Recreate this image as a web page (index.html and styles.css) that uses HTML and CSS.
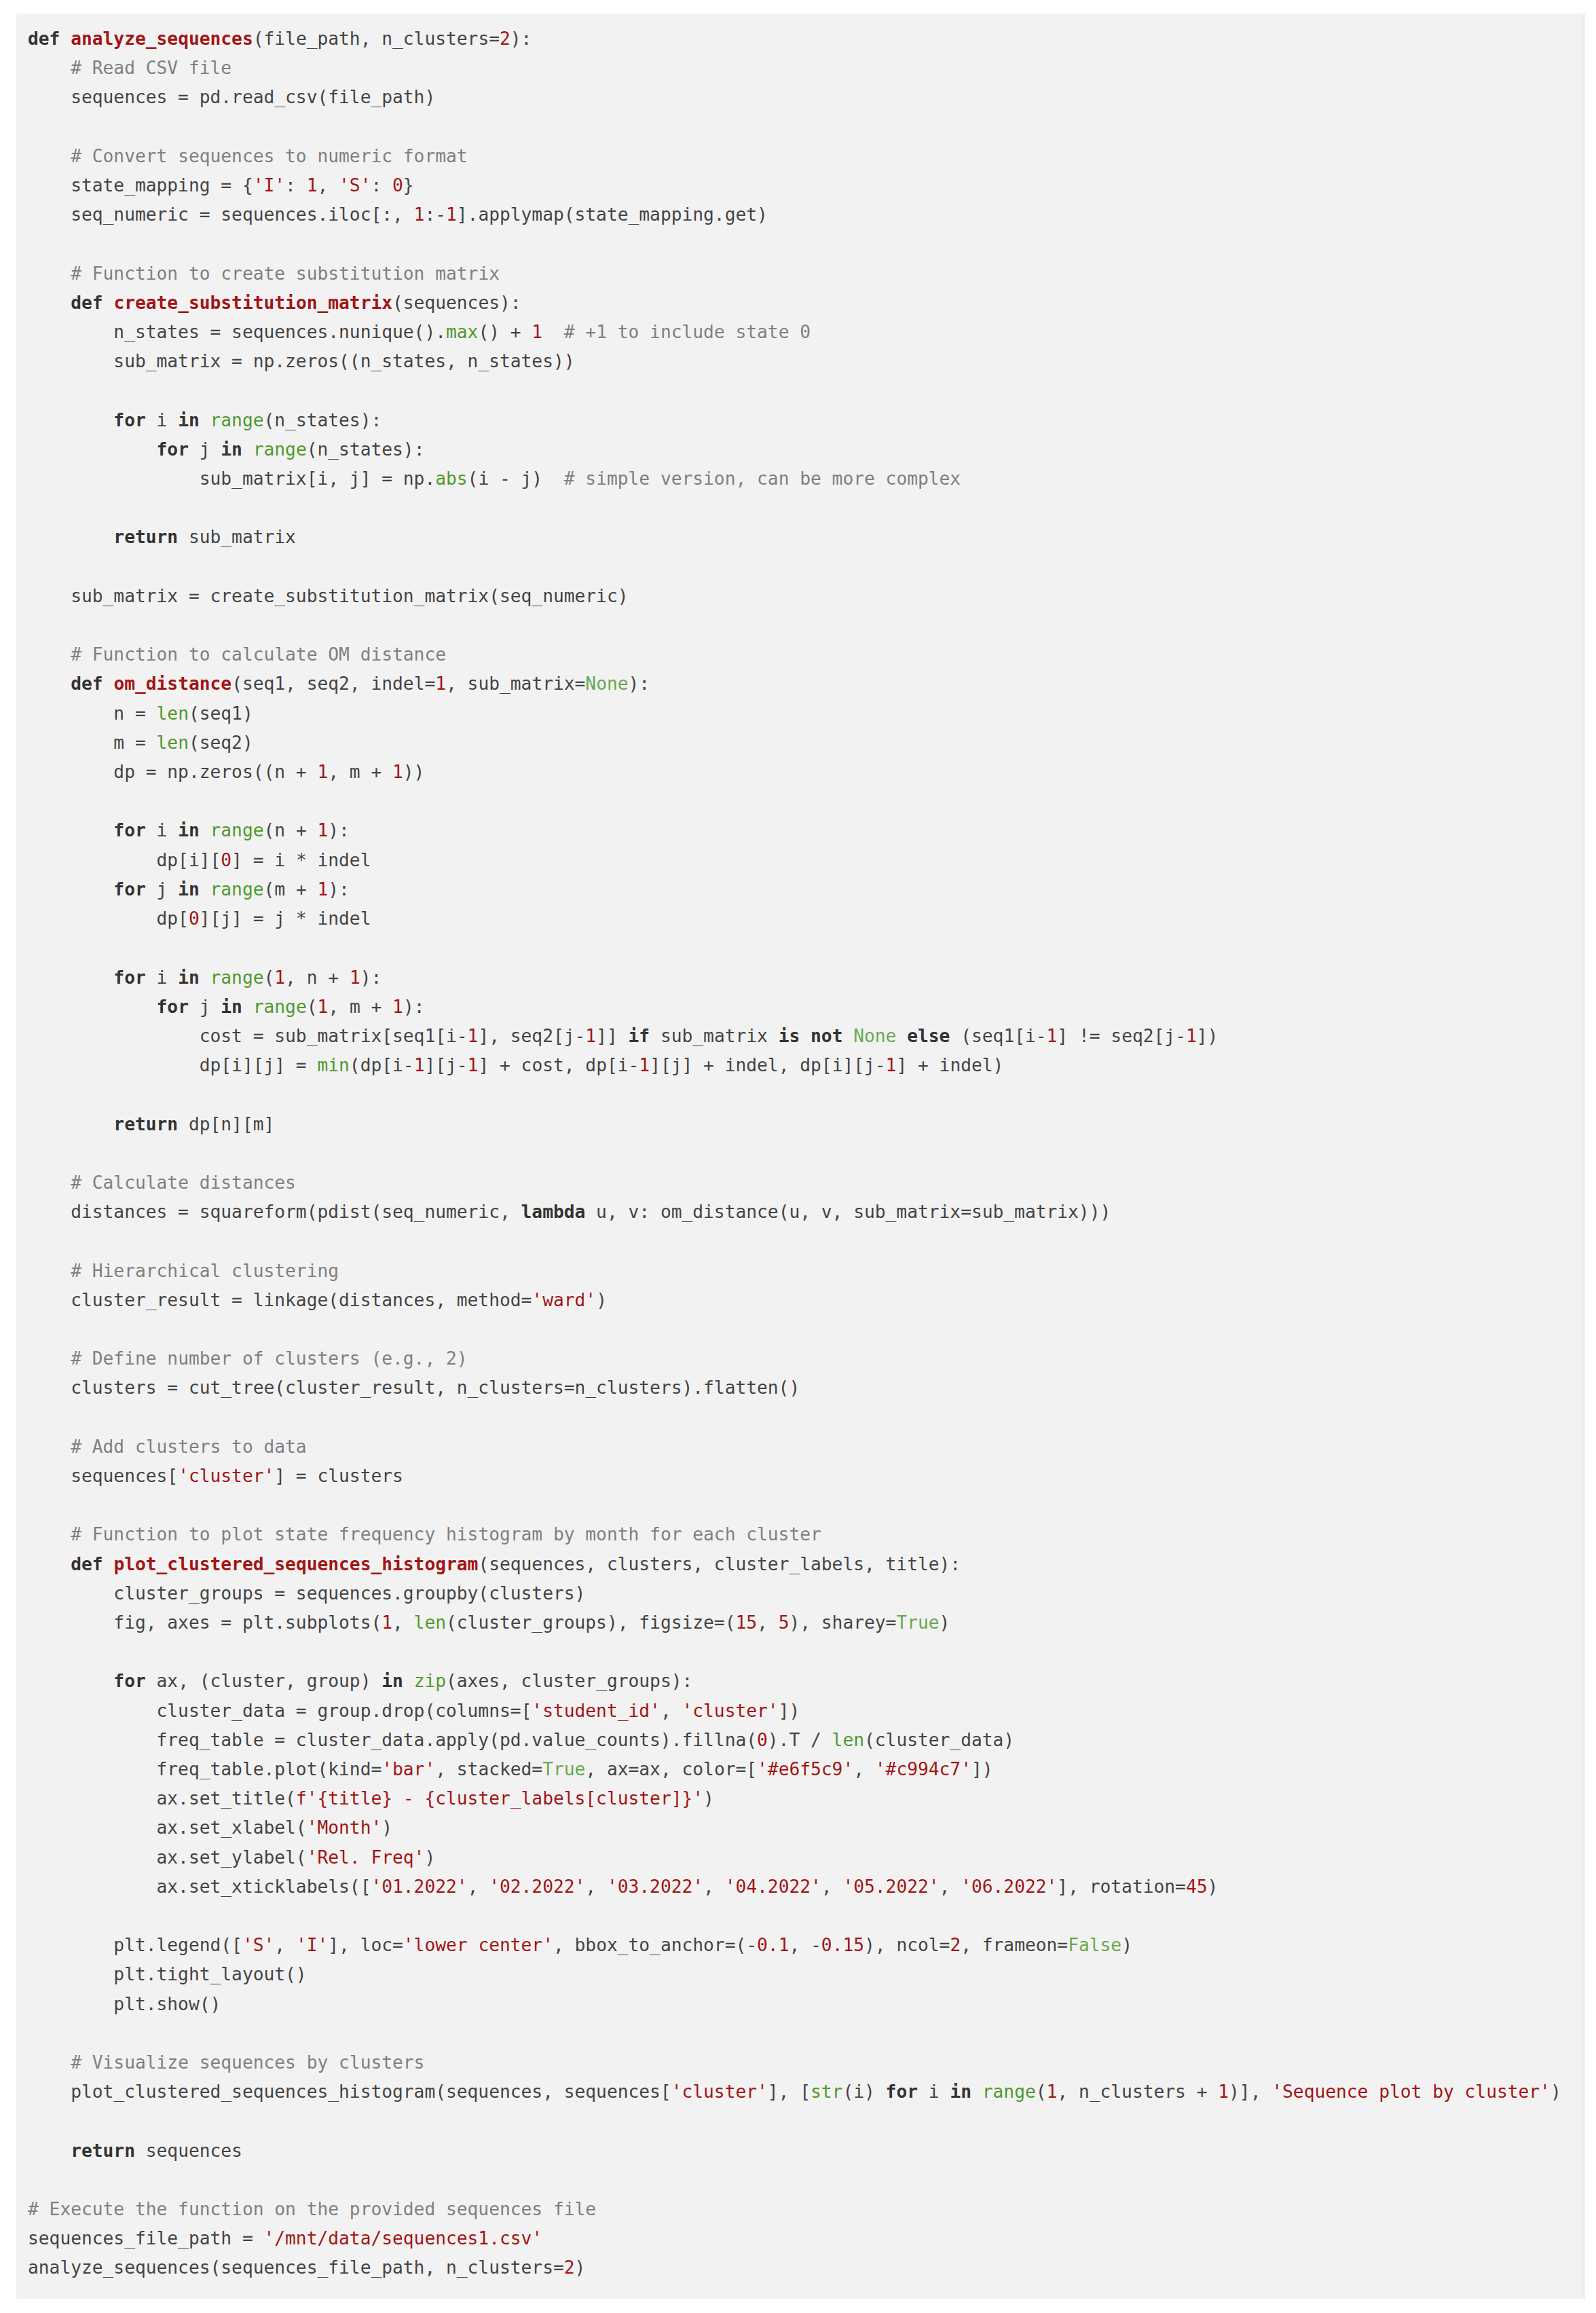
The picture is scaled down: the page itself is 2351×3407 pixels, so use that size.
FILE: index.html
```html
<!DOCTYPE html>
<html lang="en">
<head>
<meta charset="utf-8">
<title>analyze_sequences</title>
<link rel="stylesheet" href="styles.css">
</head>
<body>
<div class="codebox">
<pre class="code"><span class="k">def</span> <span class="f">analyze_sequences</span>(file_path, n_clusters=<span class="n">2</span>):
    <span class="c"># Read CSV file</span>
    sequences = pd.read_csv(file_path)

    <span class="c"># Convert sequences to numeric format</span>
    state_mapping = {<span class="s">'I'</span>: <span class="n">1</span>, <span class="s">'S'</span>: <span class="n">0</span>}
    seq_numeric = sequences.iloc[:, <span class="n">1</span>:-<span class="n">1</span>].applymap(state_mapping.get)

    <span class="c"># Function to create substitution matrix</span>
    <span class="k">def</span> <span class="f">create_substitution_matrix</span>(sequences):
        n_states = sequences.nunique().<span class="b">max</span>() + <span class="n">1</span>  <span class="c"># +1 to include state 0</span>
        sub_matrix = np.zeros((n_states, n_states))

        <span class="k">for</span> i <span class="k">in</span> <span class="b">range</span>(n_states):
            <span class="k">for</span> j <span class="k">in</span> <span class="b">range</span>(n_states):
                sub_matrix[i, j] = np.<span class="b">abs</span>(i - j)  <span class="c"># simple version, can be more complex</span>

        <span class="k">return</span> sub_matrix

    sub_matrix = create_substitution_matrix(seq_numeric)

    <span class="c"># Function to calculate OM distance</span>
    <span class="k">def</span> <span class="f">om_distance</span>(seq1, seq2, indel=<span class="n">1</span>, sub_matrix=<span class="cn">None</span>):
        n = <span class="b">len</span>(seq1)
        m = <span class="b">len</span>(seq2)
        dp = np.zeros((n + <span class="n">1</span>, m + <span class="n">1</span>))

        <span class="k">for</span> i <span class="k">in</span> <span class="b">range</span>(n + <span class="n">1</span>):
            dp[i][<span class="n">0</span>] = i * indel
        <span class="k">for</span> j <span class="k">in</span> <span class="b">range</span>(m + <span class="n">1</span>):
            dp[<span class="n">0</span>][j] = j * indel

        <span class="k">for</span> i <span class="k">in</span> <span class="b">range</span>(<span class="n">1</span>, n + <span class="n">1</span>):
            <span class="k">for</span> j <span class="k">in</span> <span class="b">range</span>(<span class="n">1</span>, m + <span class="n">1</span>):
                cost = sub_matrix[seq1[i-<span class="n">1</span>], seq2[j-<span class="n">1</span>]] <span class="k">if</span> sub_matrix <span class="k">is</span> <span class="k">not</span> <span class="cn">None</span> <span class="k">else</span> (seq1[i-<span class="n">1</span>] != seq2[j-<span class="n">1</span>])
                dp[i][j] = <span class="b">min</span>(dp[i-<span class="n">1</span>][j-<span class="n">1</span>] + cost, dp[i-<span class="n">1</span>][j] + indel, dp[i][j-<span class="n">1</span>] + indel)

        <span class="k">return</span> dp[n][m]

    <span class="c"># Calculate distances</span>
    distances = squareform(pdist(seq_numeric, <span class="k">lambda</span> u, v: om_distance(u, v, sub_matrix=sub_matrix)))

    <span class="c"># Hierarchical clustering</span>
    cluster_result = linkage(distances, method=<span class="s">'ward'</span>)

    <span class="c"># Define number of clusters (e.g., 2)</span>
    clusters = cut_tree(cluster_result, n_clusters=n_clusters).flatten()

    <span class="c"># Add clusters to data</span>
    sequences[<span class="s">'cluster'</span>] = clusters

    <span class="c"># Function to plot state frequency histogram by month for each cluster</span>
    <span class="k">def</span> <span class="f">plot_clustered_sequences_histogram</span>(sequences, clusters, cluster_labels, title):
        cluster_groups = sequences.groupby(clusters)
        fig, axes = plt.subplots(<span class="n">1</span>, <span class="b">len</span>(cluster_groups), figsize=(<span class="n">15</span>, <span class="n">5</span>), sharey=<span class="cn">True</span>)

        <span class="k">for</span> ax, (cluster, group) <span class="k">in</span> <span class="b">zip</span>(axes, cluster_groups):
            cluster_data = group.drop(columns=[<span class="s">'student_id'</span>, <span class="s">'cluster'</span>])
            freq_table = cluster_data.apply(pd.value_counts).fillna(<span class="n">0</span>).T / <span class="b">len</span>(cluster_data)
            freq_table.plot(kind=<span class="s">'bar'</span>, stacked=<span class="cn">True</span>, ax=ax, color=[<span class="s">'#e6f5c9'</span>, <span class="s">'#c994c7'</span>])
            ax.set_title(<span class="s">f'{title} - {cluster_labels[cluster]}'</span>)
            ax.set_xlabel(<span class="s">'Month'</span>)
            ax.set_ylabel(<span class="s">'Rel. Freq'</span>)
            ax.set_xticklabels([<span class="s">'01.2022'</span>, <span class="s">'02.2022'</span>, <span class="s">'03.2022'</span>, <span class="s">'04.2022'</span>, <span class="s">'05.2022'</span>, <span class="s">'06.2022'</span>], rotation=<span class="n">45</span>)

        plt.legend([<span class="s">'S'</span>, <span class="s">'I'</span>], loc=<span class="s">'lower center'</span>, bbox_to_anchor=(-<span class="n">0.1</span>, -<span class="n">0.15</span>), ncol=<span class="n">2</span>, frameon=<span class="cn">False</span>)
        plt.tight_layout()
        plt.show()

    <span class="c"># Visualize sequences by clusters</span>
    plot_clustered_sequences_histogram(sequences, sequences[<span class="s">'cluster'</span>], [<span class="b">str</span>(i) <span class="k">for</span> i <span class="k">in</span> <span class="b">range</span>(<span class="n">1</span>, n_clusters + <span class="n">1</span>)], <span class="s">'Sequence plot by cluster'</span>)

    <span class="k">return</span> sequences

<span class="c"># Execute the function on the provided sequences file</span>
sequences_file_path = <span class="s">'/mnt/data/sequences1.csv'</span>
analyze_sequences(sequences_file_path, n_clusters=<span class="n">2</span>)</pre>
</div>
</body>
</html>
```

FILE: styles.css
```css
html, body {
  margin: 0;
  padding: 0;
  background: #ffffff;
}

body {
  padding: 20px 16px 22px 24px;
}

.codebox {
  width: 2311px;
  box-sizing: border-box;
  background: #f2f2f2;
  padding: 16px 17px 23px 17px;
  box-shadow: inset -10px 0 8px -8px rgba(0, 0, 0, 0.035);
}

.code {
  margin: 0;
  font-family: "DejaVu Sans Mono", "Liberation Mono", monospace;
  font-size: 26.24px;
  line-height: 43.2px;
  color: #444444;
  white-space: pre;
}

.k {
  color: #333333;
  font-weight: bold;
}

.f {
  color: #a31515;
  font-weight: bold;
}

.s,
.n {
  color: #a31515;
}

.b {
  color: #4f9a2c;
}

.cn {
  color: #6aa84f;
}

.c {
  color: #808080;
}
```
